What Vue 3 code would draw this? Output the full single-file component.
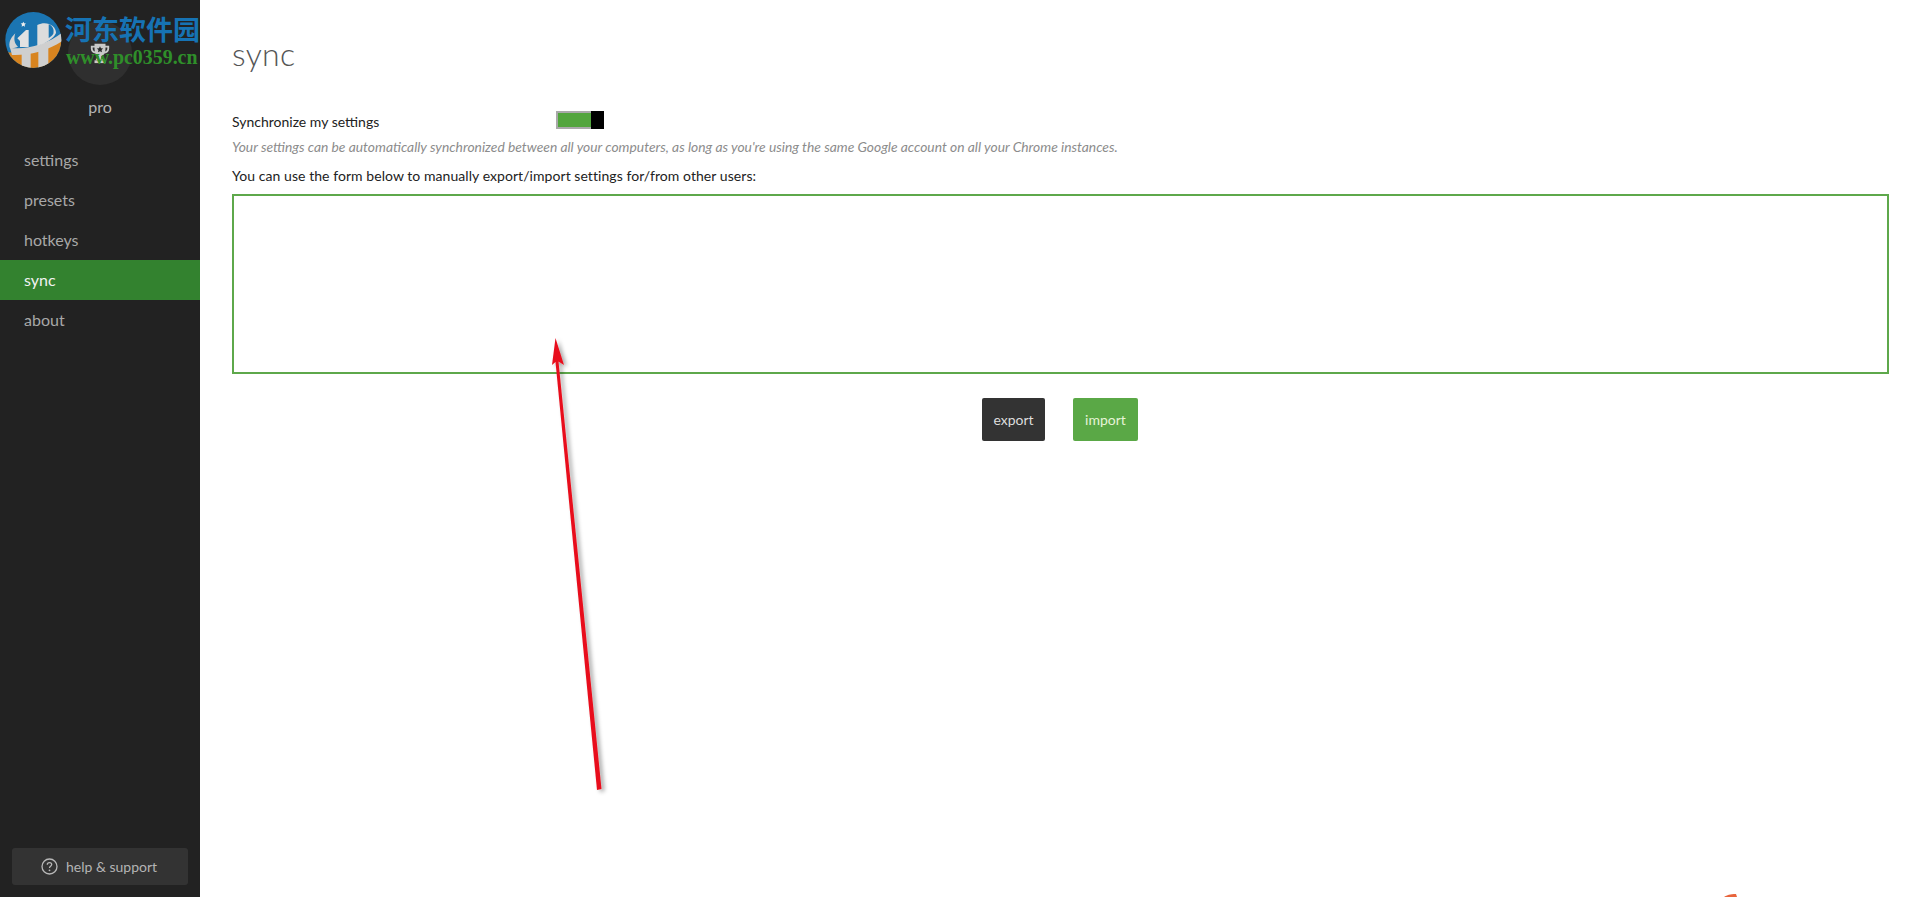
<script setup>
const navItems = [
  { label: 'settings' },
  { label: 'presets' },
  { label: 'hotkeys' },
  { label: 'sync', active: true },
  { label: 'about' }
]
</script>

<template>
  <div class="page">
    <aside class="sidebar">
      <div class="badge">
        <div class="avatar">
          <svg width="22" height="22" viewBox="0 0 24 24">
            <path d="M6 2h12v2h4v3c0 3-2 5-5 5.500C16 14 14.500 15 13.500 15.300V18h3v2H7.500v-2h3v-2.700C9.500 15 8 14 7 12.500 4 12 2 10 2 7V4h4V2zM4 6v1c0 1.500.8 2.800 2.300 3.300C6.100 9 6 7.500 6 6H4zm14 0c0 1.500-.1 3-.3 4.300C19.200 9.800 20 8.500 20 7V6h-2z" fill="#c9c9c9" fill-rule="evenodd" />
            <path d="M12 4.500l1.100 2.300 2.400.3-1.800 1.700.5 2.400-2.200-1.200-2.200 1.200.5-2.400-1.800-1.700 2.400-.3z" fill="#2a2a2a" />
            <rect x="6" y="20" width="12" height="3" fill="#c9c9c9" />
          </svg>
        </div>
        <div class="badge-label">pro</div>
      </div>
      <nav class="nav">
        <a v-for="item in navItems" :key="item.label" class="nav-item" :class="{ active: item.active }">{{ item.label }}</a>
      </nav>
      <div class="help-wrap">
        <button class="help">
          <svg width="17" height="17" viewBox="0 0 17 17" fill="none">
            <circle cx="8.500" cy="8.500" r="7.500" stroke="#b8b8b8" stroke-width="1.300" />
            <path d="M6.300 6.800c0-1.300 1-2.100 2.200-2.100s2.200.8 2.200 1.900c0 1.600-2.200 1.600-2.200 3.300" stroke="#b8b8b8" stroke-width="1.300" />
            <circle cx="8.500" cy="12.300" r=".9" fill="#b8b8b8" />
          </svg>
          <span>help &amp; support</span>
        </button>
      </div>
    </aside>

    <main class="main">
      <h1 class="title">sync</h1>
      <div class="sync-row">
        <label class="sync-label">Synchronize my settings</label>
        <div class="toggle"><div class="toggle-fill"></div><div class="toggle-knob"></div></div>
      </div>
      <p class="hint">Your settings can be automatically synchronized between all your computers, as long as you're using the same Google account on all your Chrome instances.</p>
      <p class="form-note">You can use the form below to manually export/import settings for/from other users:</p>
      <textarea class="box"></textarea>
      <div class="actions">
        <button class="btn dark">export</button>
        <button class="btn green">import</button>
      </div>
    </main>

    <div class="watermark">
      <svg class="wm-logo" width="70" height="70" viewBox="0 0 210 210">
        <defs>
          <clipPath id="wmc"><circle cx="100" cy="105" r="84" /></clipPath>
        </defs>
        <g clip-path="url(#wmc)">
          <rect width="210" height="210" fill="#1b75b2" />
          <path d="M10 140C70 150 140 135 190 100V200H10z" fill="#d8841f" />
          <path d="M30 128C75 136 145 118 190 80V106C145 138 85 152 36 150z" fill="#cfcfcf" />
          <path d="M65 135h27v60H65zM115 125h30v70h-30z" fill="#cfcfcf" />
          <path d="M112 60C140 46 168 62 168 84C160 102 136 116 112 122z" fill="#dcdcdc" />
          <path d="M146 58C158 62 163 74 160 86C156 92 151 96 146 99z" fill="#1b75b2" />
          <path d="M52 100L78 75H86V126H60V108z" fill="#e2e2e2" />
          <path d="M46 85C30 100 25 115 30 130C38 130 46 128 54 125C42 115 41 100 46 85z" fill="#d2d2d2" />
          <path d="M70 50l2.500 5 5.500.7-4 3.800 1 5.500-5-2.700-5 2.700 1-5.500-4-3.800 5.500-.7z" fill="#eee" />
        </g>
      </svg>
      <div class="wm-cn">河东软件园</div>
      <div class="wm-url">www.pc0359.cn</div>
    </div>

    <svg class="annot" width="1920" height="897" viewBox="0 0 1920 897">
      <defs>
        <filter id="shade" x="-50%" y="-10%" width="200%" height="120%">
          <feDropShadow dx="3" dy="2" stdDeviation="2" flood-color="#000" flood-opacity=".35" />
        </filter>
      </defs>
      <g filter="url(#shade)">
        <path d="M555.500 338L564 365 558.500 361.500 601.500 789 597 790 555.500 362 552 365z" fill="#e8101c" />
      </g>
      <path d="M1724 897c3-2 6-3 12-3l1 3z" fill="#e8643c" />
    </svg>
  </div>
</template>

<style>
html, body { margin: 0; background: #fff; }
</style>

<style scoped>
.page {
  display: flex;
  height: 897px;
  position: relative;
  overflow: hidden;
  font-family: Lato, "Liberation Sans", sans-serif;
  background: #fff;
}
.sidebar {
  width: 200px;
  flex: none;
  display: flex;
  flex-direction: column;
  background: #222;
}
.badge {
  display: flex;
  flex-direction: column;
  align-items: center;
  padding-top: 21px;
}
.avatar {
  width: 64px;
  height: 64px;
  border-radius: 50%;
  background: #2f2f2f;
  display: flex;
  align-items: center;
  justify-content: center;
}
.badge-label {
  margin-top: 11px;
  font-size: 16px;
  line-height: 22px;
  color: #b4b4b4;
}
.nav {
  margin-top: 22px;
  display: flex;
  flex-direction: column;
}
.nav-item {
  height: 40px;
  line-height: 40px;
  padding-left: 24px;
  font-size: 16px;
  color: #a8a8a8;
}
.nav-item.active {
  background: #33822f;
  color: #f2f2f2;
}
.help-wrap {
  margin-top: auto;
  padding: 0 12px 12px;
}
.help {
  width: 176px;
  height: 37px;
  border: 0;
  border-radius: 3px;
  background: #333;
  color: #b4b4b4;
  font: 14px Lato, "Liberation Sans", sans-serif;
  display: flex;
  align-items: center;
  justify-content: center;
  gap: 8px;
  padding: 0 2px 0 0;
}
.main {
  flex: 1;
  min-width: 0;
  padding: 0 31px 0 32px;
  color: #222;
}
.title {
  margin: 32px 0 0;
  font-size: 32px;
  line-height: 44px;
  font-weight: 300;
  letter-spacing: .3px;
  color: #555;
}
.sync-row {
  display: flex;
  align-items: center;
  margin-top: 35px;
  height: 18px;
}
.sync-label {
  width: 324px;
  font-size: 14px;
  line-height: 18px;
  position: relative;
  top: 2px;
}
.toggle {
  width: 48px;
  height: 18px;
  display: flex;
  align-items: stretch;
}
.toggle-fill {
  flex: 1;
  box-sizing: border-box;
  background: #52a53d;
  border: 2px solid #a9a9a9;
  border-right: 0;
}
.toggle-knob {
  width: 13px;
  background: #000;
}
.hint {
  margin: 9px 0 0;
  font-size: 13.840px;
  line-height: 18px;
  font-style: italic;
  color: #8c8c8c;
}
.form-note {
  margin: 11px 0 0;
  font-size: 14px;
  line-height: 18px;
  letter-spacing: .06px;
}
.box {
  display: block;
  box-sizing: border-box;
  width: 100%;
  height: 180px;
  margin-top: 9px;
  border: 2px solid #5ea84b;
  border-radius: 0;
  outline: 0;
  resize: none;
  background: #fff;
}
.actions {
  display: flex;
  justify-content: center;
  gap: 28px;
  margin-top: 24px;
  padding-right: 1px;
}
.btn {
  height: 43px;
  border: 0;
  border-radius: 2px;
  font: 14px Lato, "Liberation Sans", sans-serif;
  padding: 0;
}
.btn.dark {
  width: 63px;
  background: #333;
  color: #ddd;
}
.btn.green {
  width: 65px;
  background: #5aa846;
  color: #e6f4d8;
}
.watermark {
  position: absolute;
  left: 0;
  top: 0;
  width: 201px;
  height: 72px;
  overflow: hidden;
  pointer-events: none;
}
.wm-logo {
  position: absolute;
  left: 0;
  top: 5px;
}
.wm-cn {
  position: absolute;
  left: 65px;
  top: 11px;
  font: 700 27px/36px "Noto Sans CJK SC", "Liberation Serif", serif;
  color: #1673b4;
  white-space: nowrap;
}
.wm-url {
  position: absolute;
  left: 66px;
  top: 47px;
  font: 700 19.900px/20px "Liberation Serif", serif;
  color: #2f8f2a;
  white-space: nowrap;
}
.annot {
  position: absolute;
  left: 0;
  top: 0;
  pointer-events: none;
}
</style>
